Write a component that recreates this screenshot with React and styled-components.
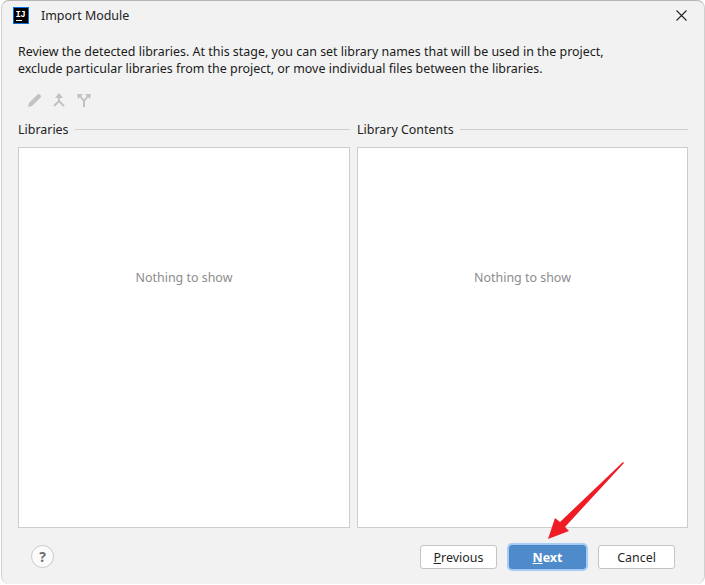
import React from "react";
import styled, { createGlobalStyle } from "styled-components";

const GlobalStyle = createGlobalStyle`
  html, body {
    margin: 0;
    padding: 0;
    background: #ffffff;
  }
  body {
    width: 705px;
    height: 585px;
    overflow: hidden;
    font-family: "Noto Sans", "Open Sans", "Liberation Sans", sans-serif;
  }
`;

const Dialog = styled.div`
  box-sizing: border-box;
  width: 704px;
  height: 584px;
  margin-left: 1px;
  display: flex;
  flex-direction: column;
  background: #f2f2f2;
  border-top: 1px solid #b4b4b4;
  border-left: 1px solid #d0d0d0;
  border-right: 1px solid #d0d0d0;
  border-radius: 8px;
  color: #1a1a1a;
  font-size: 12.45px;
`;

const TitleBar = styled.div`
  height: 29px;
  display: flex;
  align-items: center;
  padding: 0 17px 0 11px;
  gap: 12px;
`;

const Title = styled.div`
  flex: 1;
  color: #222;
`;

const CloseButton = styled.svg`
  width: 11px;
  height: 11px;
`;

const Content = styled.div`
  flex: 1;
  display: flex;
  flex-direction: column;
  padding: 13px 16px 0 16px;
`;

const Description = styled.p`
  margin: 0;
  line-height: 17px;
  color: #1a1a1a;
`;

const Toolbar = styled.div`
  display: flex;
  align-items: center;
  gap: 10px;
  margin: 14px 0 0 8px;
  height: 18px;
`;

const Panels = styled.div`
  display: flex;
  gap: 7px;
  margin-top: 11px;
`;

const Panel = styled.div`
  width: ${(p) => p.$width}px;
  display: flex;
  flex-direction: column;
`;

const PanelHeader = styled.div`
  display: flex;
  align-items: center;
  gap: 6px;
  height: 18px;
  margin-bottom: 9px;
  color: #222;
`;

const HeaderRule = styled.div`
  flex: 1;
  height: 1px;
  background: #cfcfcf;
`;

const ListBox = styled.div`
  box-sizing: border-box;
  height: 381px;
  padding-bottom: 120px;
  background: #ffffff;
  border: 1px solid #cdcdcd;
  display: flex;
  align-items: center;
  justify-content: center;
  color: #8c8c8c;
`;

const Footer = styled.div`
  display: flex;
  align-items: center;
  gap: 12px;
  margin-top: 17px;
  padding: 0 13px 0 13px;
`;

const HelpButton = styled.div`
  box-sizing: border-box;
  width: 23px;
  height: 23px;
  border-radius: 50%;
  margin-right: auto;
  align-self: flex-start;
  background: #fbfbfb;
  border: 1px solid #c8c8c8;
  display: flex;
  align-items: center;
  justify-content: center;
  font-size: 14px;
  font-weight: 700;
  color: #6e6e6e;
`;

const Button = styled.button`
  box-sizing: border-box;
  width: 77px;
  height: 24px;
  padding: 0;
  border-radius: 3px;
  font: inherit;
  border: 1px solid ${(p) => (p.$primary ? "#4a86c5" : "#c4c4c4")};
  background: ${(p) => (p.$primary ? "#4f8bca" : "#ffffff")};
  color: ${(p) => (p.$primary ? "#ffffff" : "#1f1f1f")};
  font-weight: ${(p) => (p.$primary ? 700 : 400)};
  box-shadow: ${(p) => (p.$primary ? "0 0 0 2px #a6cdf5" : "none")};
`;

const Arrow = styled.svg`
  position: absolute;
  left: 540px;
  top: 455px;
  width: 90px;
  height: 90px;
`;

const PencilIcon = () => (
  <svg width="16" height="16" viewBox="0 0 16 16">
    <path d="M2 15 L3 11 L11.5 2.5 Q13 1.5 14.5 3 Q15.5 4.5 14.5 5.5 L6 14 Z" fill="#c2c2c2" />
  </svg>
);

const MergeIcon = () => (
  <svg width="14" height="16" viewBox="0 0 14 16">
    <path
      d="M7 3 L7 9 M7 9 L2 14 M7 9 L12 14"
      stroke="#c2c2c2"
      strokeWidth="2"
      fill="none"
    />
    <path d="M7 1 L11 6 L3 6 Z" fill="#c2c2c2" />
  </svg>
);

const SplitIcon = () => (
  <svg width="16" height="16" viewBox="0 0 16 16">
    <path
      d="M8 15 L8 9 L4 4 M8 9 L12 4"
      stroke="#c2c2c2"
      strokeWidth="2"
      fill="none"
    />
    <path d="M1 2 L7 2 L2 7 Z M15 2 L9 2 L14 7 Z" fill="#c2c2c2" />
  </svg>
);

const Logo = () => (
  <svg width="16" height="17" viewBox="0 0 16 17">
    <rect x="0.5" y="0.5" width="15" height="16" fill="#000" stroke="#0a6fe0" />
    <text x="2.5" y="9.5" fontSize="9" fontWeight="700" fontFamily="Liberation Mono" letterSpacing="-0.6" fill="#fff">IJ</text>
    <rect x="3" y="13" width="6" height="1" fill="#fff" />
  </svg>
);

const App = () => {
  return (
    <>
      <GlobalStyle />
      <Dialog>
        <TitleBar>
          <Logo />
          <Title>Import Module</Title>
          <CloseButton viewBox="0 0 11 11">
            <path d="M0.5 0.5 L10.5 10.5 M10.5 0.5 L0.5 10.5" stroke="#222" strokeWidth="1.1" />
          </CloseButton>
        </TitleBar>
        <Content>
          <Description>
            Review the detected libraries. At this stage, you can set library names that will be used in the project,
            <br />
            exclude particular libraries from the project, or move individual files between the libraries.
          </Description>
          <Toolbar>
            <PencilIcon />
            <MergeIcon />
            <SplitIcon />
          </Toolbar>
          <Panels>
            <Panel $width={332}>
              <PanelHeader>
                Libraries
                <HeaderRule />
              </PanelHeader>
              <ListBox>Nothing to show</ListBox>
            </Panel>
            <Panel $width={331}>
              <PanelHeader>
                Library Contents
                <HeaderRule />
              </PanelHeader>
              <ListBox>Nothing to show</ListBox>
            </Panel>
          </Panels>
          <Footer>
            <HelpButton>?</HelpButton>
            <Button>
              <u>P</u>revious
            </Button>
            <Button $primary>
              <u>N</u>ext
            </Button>
            <Button>Cancel</Button>
          </Footer>
        </Content>
      </Dialog>
      <Arrow viewBox="0 0 90 90">
        <path d="M83 7 L84 8 L25 72 L29 76 L8 84 L15 63 L20 67 Z" fill="#ee1c25" />
      </Arrow>
    </>
  );
};

export default App;
